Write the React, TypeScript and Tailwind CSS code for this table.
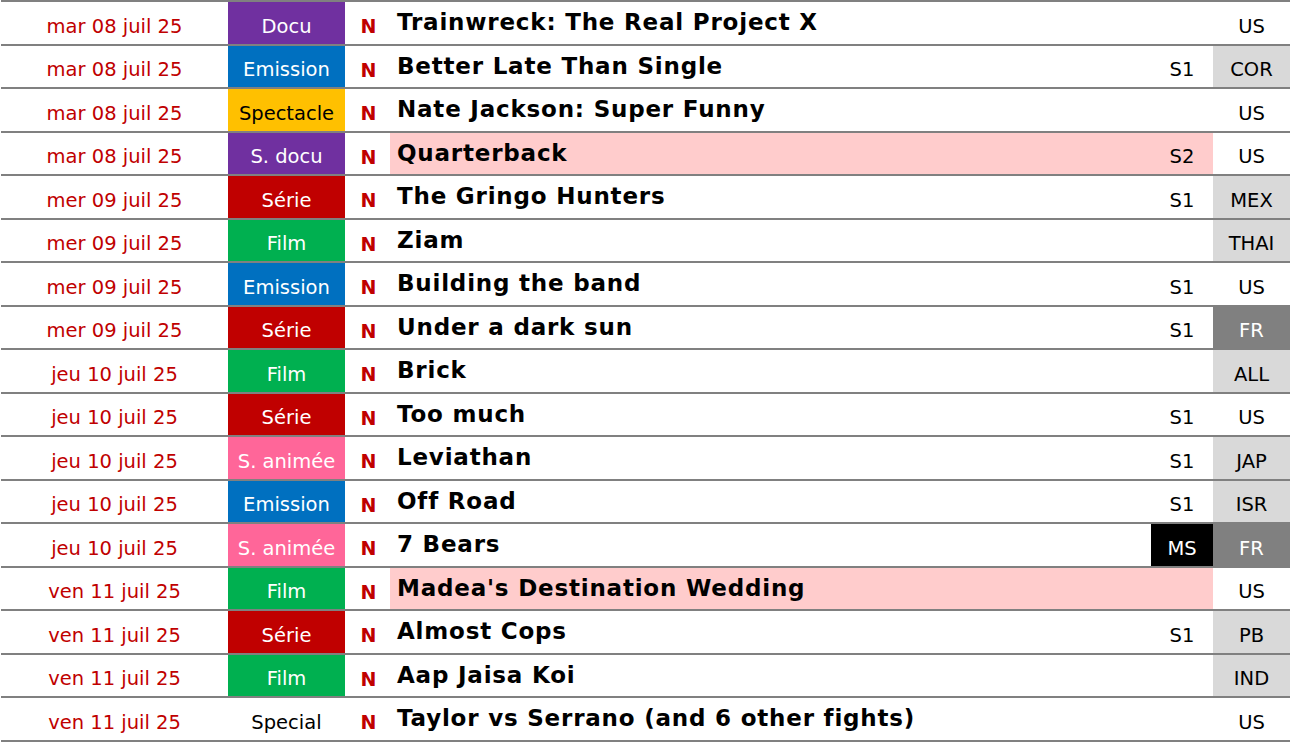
import React from "react";

type Row = {
  date: string;
  cat: string;
  catCls: string;
  title: string;
  pink?: boolean;
  season: string;
  seasonCls?: string;
  country: string;
  countryCls: string;
};

const PURPLE = "bg-[#7030a0] text-white";
const BLUE = "bg-[#0070c0] text-white";
const YELLOW = "bg-[#ffc000] text-black";
const RED = "bg-[#c00000] text-white";
const GREEN = "bg-[#00b050] text-white";
const PINK = "bg-[#ff6699] text-white";
const NONE = "text-black";

const CW = "bg-white text-black";
const CG = "bg-[#d9d9d9] text-black";
const CD = "bg-[#808080] text-white";

const rows: Row[] = [
  { date: "mar 08 juil 25", cat: "Docu", catCls: PURPLE, title: "Trainwreck: The Real Project X", season: "", country: "US", countryCls: CW },
  { date: "mar 08 juil 25", cat: "Emission", catCls: BLUE, title: "Better Late Than Single", season: "S1", country: "COR", countryCls: CG },
  { date: "mar 08 juil 25", cat: "Spectacle", catCls: YELLOW, title: "Nate Jackson: Super Funny", season: "", country: "US", countryCls: CW },
  { date: "mar 08 juil 25", cat: "S. docu", catCls: PURPLE, title: "Quarterback", pink: true, season: "S2", country: "US", countryCls: CW },
  { date: "mer 09 juil 25", cat: "Série", catCls: RED, title: "The Gringo Hunters", season: "S1", country: "MEX", countryCls: CG },
  { date: "mer 09 juil 25", cat: "Film", catCls: GREEN, title: "Ziam", season: "", country: "THAI", countryCls: CG },
  { date: "mer 09 juil 25", cat: "Emission", catCls: BLUE, title: "Building the band", season: "S1", country: "US", countryCls: CW },
  { date: "mer 09 juil 25", cat: "Série", catCls: RED, title: "Under a dark sun", season: "S1", country: "FR", countryCls: CD },
  { date: "jeu 10 juil 25", cat: "Film", catCls: GREEN, title: "Brick", season: "", country: "ALL", countryCls: CG },
  { date: "jeu 10 juil 25", cat: "Série", catCls: RED, title: "Too much", season: "S1", country: "US", countryCls: CW },
  { date: "jeu 10 juil 25", cat: "S. animée", catCls: PINK, title: "Leviathan", season: "S1", country: "JAP", countryCls: CG },
  { date: "jeu 10 juil 25", cat: "Emission", catCls: BLUE, title: "Off Road", season: "S1", country: "ISR", countryCls: CG },
  { date: "jeu 10 juil 25", cat: "S. animée", catCls: PINK, title: "7 Bears", season: "MS", seasonCls: "bg-black text-white", country: "FR", countryCls: CD },
  { date: "ven 11 juil 25", cat: "Film", catCls: GREEN, title: "Madea's Destination Wedding", pink: true, season: "", country: "US", countryCls: CW },
  { date: "ven 11 juil 25", cat: "Série", catCls: RED, title: "Almost Cops", season: "S1", country: "PB", countryCls: CG },
  { date: "ven 11 juil 25", cat: "Film", catCls: GREEN, title: "Aap Jaisa Koi", season: "", country: "IND", countryCls: CG },
  { date: "ven 11 juil 25", cat: "Special", catCls: NONE, title: "Taylor vs Serrano (and 6 other fights)", season: "", country: "US", countryCls: CW },
];

export default function App() {
  return (
    <div
      className="w-[1292px] h-[743px] bg-white overflow-hidden"
      style={{ fontFamily: "'DejaVu Sans', 'Noto Sans', sans-serif" }}
    >
      <div className="ml-[1px] w-[1289px] border-t-2 border-[#808080]">
        {rows.map((r, i) => (
          <div key={i} className="flex h-[43.5px] border-b-2 border-[#808080] text-[19.5px]">
            <div className="w-[227px] flex items-center justify-center pt-[7px] text-[#c00000]">{r.date}</div>
            <div className={`w-[117px] flex items-center justify-center pt-[7px] ${r.catCls}`}>{r.cat}</div>
            <div className="w-[45px] flex items-center justify-center pt-[7px] pl-[2px] font-bold text-[19px] text-[#c00000]">N</div>
            <div className={`flex-1 flex items-center ${r.pink ? "bg-[#ffcccc]" : ""}`}>
              <div className="flex-1 pl-[7px] pb-[1px] text-[23px] tracking-[0.8px] font-bold text-black">{r.title}</div>
              <div className={`w-[62px] h-full flex items-center justify-center pt-[7px] ${r.seasonCls ?? "text-black"}`}>{r.season}</div>
            </div>
            <div className={`w-[77px] flex items-center justify-center pt-[7px] ${r.countryCls}`}>{r.country}</div>
          </div>
        ))}
      </div>
    </div>
  );
}
